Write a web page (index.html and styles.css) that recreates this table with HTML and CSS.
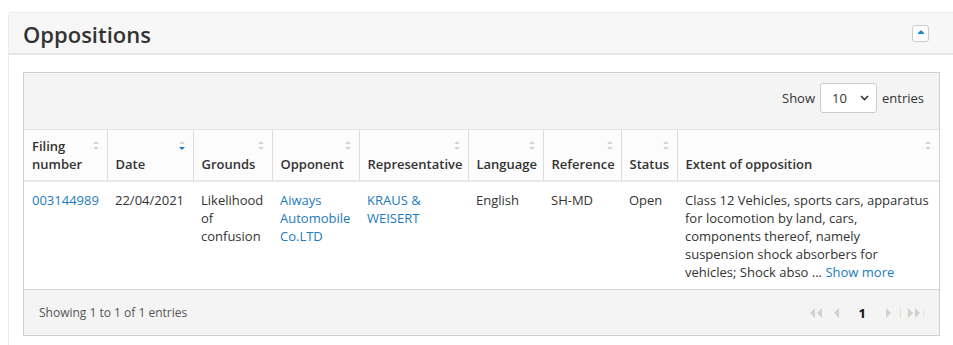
FILE: index.html
```html
<!DOCTYPE html>
<html lang="en">
<head>
    <meta charset="UTF-8">
    <meta name="viewport" content="width=device-width, initial-scale=1.0">
    <title>Oppositions</title>
    <link rel="stylesheet" href="styles.css">
</head>
<body>
    <div class="panel">
        <div class="panel-heading">
            <h2 class="panel-title">Oppositions</h2>
            <button type="button" class="collapse-btn" title="Collapse">
                <svg width="6" height="4" viewBox="0 0 6 4"><path d="M3 0 L6 3 L6 4 L0 4 L0 3 Z" fill="#1c86c6"/></svg>
            </button>
        </div>
        <div class="panel-body">
            <div class="dt-wrapper">
                <div class="dt-toolbar">
                    <label class="dt-length">
                        Show
                        <span class="select-wrap">
                            <select class="dt-select">
                                <option>10</option>
                                <option>25</option>
                                <option>50</option>
                            </select>
                            <svg class="select-arrow" width="9" height="6" viewBox="0 0 9 6"><path d="M1 1 L4.5 4.5 L8 1" fill="none" stroke="#333" stroke-width="1.6"/></svg>
                        </span>
                        entries
                    </label>
                </div>
                <table class="dt-table">
                    <colgroup>
                        <col style="width:83px">
                        <col style="width:86px">
                        <col style="width:79px">
                        <col style="width:87px">
                        <col style="width:109px">
                        <col style="width:75px">
                        <col style="width:78px">
                        <col style="width:56px">
                        <col>
                    </colgroup>
                    <thead>
                        <tr>
                            <th>Filing number<span class="sort"></span></th>
                            <th>Date<span class="sort sort-desc"></span></th>
                            <th>Grounds<span class="sort"></span></th>
                            <th>Opponent<span class="sort"></span></th>
                            <th>Representative<span class="sort"></span></th>
                            <th>Language<span class="sort"></span></th>
                            <th>Reference<span class="sort"></span></th>
                            <th>Status<span class="sort"></span></th>
                            <th>Extent of opposition<span class="sort"></span></th>
                        </tr>
                    </thead>
                    <tbody>
                        <tr>
                            <td><a href="#">003144989</a></td>
                            <td>22/04/2021</td>
                            <td>Likelihood of confusion</td>
                            <td><a href="#">Aiways Automobile Co.LTD</a></td>
                            <td><a href="#">KRAUS &amp; WEISERT</a></td>
                            <td>English</td>
                            <td>SH-MD</td>
                            <td>Open</td>
                            <td>Class 12 Vehicles, sports cars, apparatus for locomotion by land, cars, components thereof, namely suspension shock absorbers for vehicles; Shock abso ... <a href="#">Show more</a></td>
                        </tr>
                    </tbody>
                </table>
                <div class="dt-footer">
                    <div class="dt-info">Showing 1 to 1 of 1 entries</div>
                    <div class="dt-paging">
                        <a class="page-btn first" href="#"><svg width="14" height="10" viewBox="0 0 14 10"><path d="M6 0 L1 5 L6 10 Z M13 0 L8 5 L13 10 Z" fill="#d0d0d0"/></svg></a>
                        <a class="page-btn prev" href="#"><svg width="6" height="10" viewBox="0 0 6 10"><path d="M6 0 L1 5 L6 10 Z" fill="#d0d0d0"/></svg></a>
                        <a class="page-btn current" href="#">1</a>
                        <a class="page-btn next" href="#"><svg width="6" height="10" viewBox="0 0 6 10"><path d="M0 0 L5 5 L0 10 Z" fill="#d0d0d0"/></svg></a>
                        <span class="page-sep"></span>
                        <a class="page-btn last" href="#"><svg width="17" height="10" viewBox="0 0 17 10"><path d="M0 0 L5 5 L0 10 Z M7 0 L12 5 L7 10 Z" fill="#d0d0d0"/><rect x="15" y="0" width="1" height="10" fill="#e6e6e6"/></svg></a>
                    </div>
                </div>
            </div>
        </div>
    </div>
</body>
</html>
```

FILE: styles.css
```css
html, body {
    overflow: hidden;
}
body {
    margin: 0;
    padding: 12px 0 0 8px;
    background: #fff;
    font-family: 'Open Sans', sans-serif;
    font-size: 13px;
    color: #333;
}
a {
    color: #1b7bc0;
    text-decoration: none;
}
.panel {
    width: 945px;
    border: 1px solid #ebebeb;
    border-radius: 3px 3px 0 0;
    background: #fff;
}
.panel-heading {
    display: flex;
    align-items: center;
    justify-content: space-between;
    height: 40px;
    padding: 0 25px 0 14px;
    background: #f7f7f7;
    border-bottom: 2px solid #e6e6e6;
}
.panel-title {
    margin: 2px 0 0 0;
    font-size: 22px;
    font-weight: 600;
    color: #333;
    line-height: 30px;
}
.collapse-btn {
    width: 17px;
    height: 17px;
    padding: 0 0 3px 0;
    border: 1px solid #ccc;
    border-radius: 3px;
    background: #fff;
    display: flex;
    align-items: center;
    justify-content: center;
    cursor: pointer;
}
.panel-body {
    padding: 17px 14px 20px 14px;
}
.dt-wrapper {
    border: 1px solid #cfcfcf;
    background: #f4f4f4;
}
.dt-toolbar {
    display: flex;
    justify-content: flex-end;
    height: 56px;
    padding: 10px 15px 0 0;
    box-sizing: border-box;
}
.dt-length {
    display: flex;
    align-items: center;
    gap: 5px;
    height: 30px;
    color: #333;
}
.select-wrap {
    position: relative;
    display: block;
}
.dt-select {
    display: block;
    width: 57px;
    height: 30px;
    padding: 0 0 0 11px;
    border: 1px solid #ccc;
    border-radius: 3px;
    background: #fff;
    font-family: 'Open Sans', sans-serif;
    font-size: 13px;
    color: #333;
    appearance: none;
    -webkit-appearance: none;
}
.select-arrow {
    position: absolute;
    right: 8px;
    top: 12px;
    pointer-events: none;
}
.dt-table {
    width: 100%;
    table-layout: fixed;
    border-collapse: collapse;
    background: #fff;
}
.dt-table th {
    position: relative;
    padding: 7px 20px 7px 8px;
    text-align: left;
    vertical-align: bottom;
    font-weight: 600;
    line-height: 18px;
    background: #fcfcfc;
    border-top: 1px solid #e2e2e2;
    border-left: 1px solid #dcdcdc;
    border-bottom: 2px solid #e9e9e9;
}
.dt-table th:first-child {
    border-left: none;
}
.dt-table td {
    padding: 9px 8px 8px 8px;
    vertical-align: top;
    line-height: 18px;
}
.sort {
    position: absolute;
    top: 11px;
    right: 8px;
    width: 6px;
    height: 9px;
}
.sort::before,
.sort::after {
    content: "";
    position: absolute;
    left: 0;
    border-left: 3px solid transparent;
    border-right: 3px solid transparent;
}
.sort::before {
    top: 0;
    border-bottom: 3px solid #d4d4d4;
}
.sort::after {
    bottom: 0;
    border-top: 3px solid #d4d4d4;
}
.sort-desc::after {
    border-top-color: #1b7bc0;
}
.dt-footer {
    display: flex;
    align-items: center;
    justify-content: space-between;
    height: 45px;
    padding: 0 14px 0 15px;
    border-top: 1px solid #d6d6d6;
}
.dt-info {
    font-size: 12px;
    color: #555;
}
.dt-paging {
    display: flex;
    align-items: center;
}
.page-btn {
    display: flex;
    align-items: center;
    height: 20px;
}
.page-btn.first {
    margin-right: 10px;
}
.page-btn.prev {
    margin-right: 20px;
}
.page-btn.current {
    margin-right: 20px;
    font-weight: 700;
    color: #111;
}
.page-sep {
    width: 1px;
    height: 10px;
    margin: 0 7px 0 8px;
    background: #f0dcc0;
}
```
